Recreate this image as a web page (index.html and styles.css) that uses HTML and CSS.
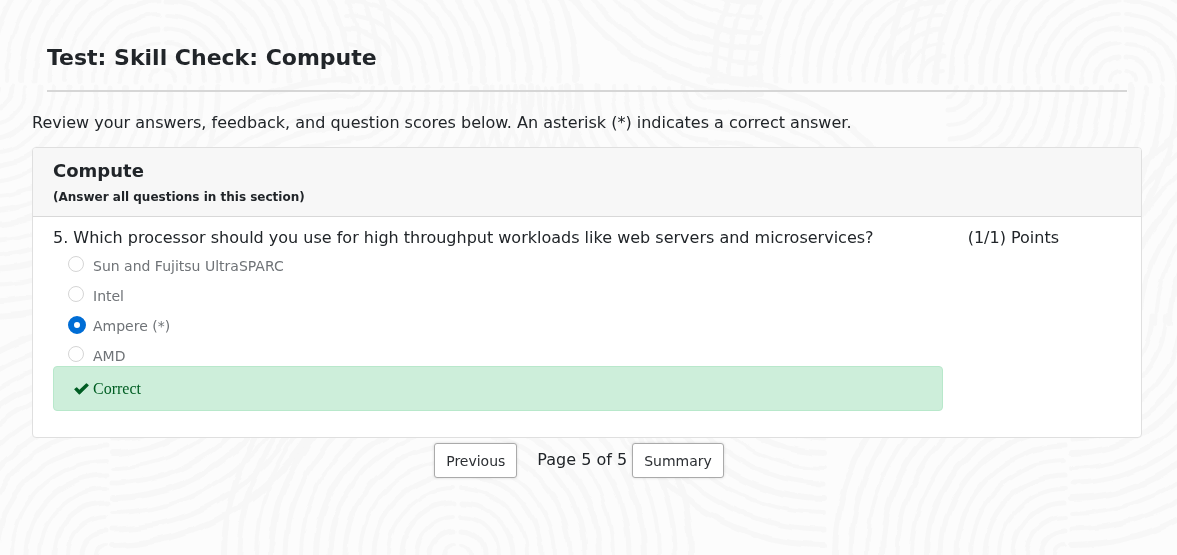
FILE: index.html
```html
<!DOCTYPE html>
<html lang="en">
<head>
<meta charset="utf-8">
<title>Test: Skill Check: Compute</title>
<link rel="stylesheet" href="styles.css">
</head>
<body>
<svg class="backdrop" aria-hidden="true">
  <defs>
    <filter id="wobble" filterUnits="userSpaceOnUse" x="0" y="0" width="100%" height="100%">
      <feTurbulence type="fractalNoise" baseFrequency="0.04" numOctaves="2" seed="4"/>
      <feDisplacementMap in="SourceGraphic" scale="6" xChannelSelector="R" yChannelSelector="G"/>
    </filter>
    <g id="fan">
      <path stroke-width="4" d="M0 10A10 10 0 0 0 10 0M0 38A38 38 0 0 0 38 0M0 66A66 66 0 0 0 66 0M0 94A94 94 0 0 0 94 0M0 153A153 153 0 0 0 153 0M0 198A198 198 0 0 0 198 0"/>
      <path stroke-width="5" d="M0 24A24 24 0 0 0 24 0M0 52A52 52 0 0 0 52 0M0 80A80 80 0 0 0 80 0M0 109A109 109 0 0 0 109 0M0 124A124 124 0 0 0 124 0M0 168A168 168 0 0 0 168 0M0 214A214 214 0 0 0 214 0"/>
      <path stroke-width="6" d="M0 138A138 138 0 0 0 138 0M0 183A183 183 0 0 0 183 0M0 230A230 230 0 0 0 230 0"/>
    </g>
  </defs>
  <g class="rings" filter="url(#wobble)">
    <use href="#fan" transform="translate(159 81) scale(-1 -1)"/>
    <use href="#fan" transform="translate(166 81) scale(1 -1)"/>
    <use href="#fan" transform="translate(346 81) scale(1 -1)"/>
    <use href="#fan" transform="translate(760 -135) scale(-1 1)"/>
    <use href="#fan" transform="translate(943 81) scale(-1 -1)"/>
    <use href="#fan" transform="translate(1119 81) scale(-1 -1)"/>
    <use href="#fan" transform="translate(1126 81) scale(1 -1)"/>
    <use href="#fan" transform="translate(-12 87)"/>
    <use href="#fan" transform="translate(348 310) scale(-1 -1)"/>
    <use href="#fan" transform="translate(348 87)"/>
    <use href="#fan" transform="translate(706 87) scale(-1 1)"/>
    <use href="#fan" transform="translate(710 310) scale(1 -1)"/>
    <use href="#fan" transform="translate(948 87)"/>
    <use href="#fan" transform="translate(1308 324) scale(-1 -1)"/>
    <use href="#fan" transform="translate(106 555) scale(-1 -1)"/>
    <use href="#fan" transform="translate(112 315)"/>
    <use href="#fan" transform="translate(454 555) scale(-1 -1)"/>
    <use href="#fan" transform="translate(461 555) scale(1 -1)"/>
    <use href="#fan" transform="translate(824 315) scale(-1 1)"/>
    <use href="#fan" transform="translate(1065 555) scale(-1 -1)"/>
    <use href="#fan" transform="translate(1072 315)"/>
  </g>
</svg>
<main class="page">
  <h1 class="title">Test: Skill Check: Compute</h1>
  <p class="intro">Review your answers, feedback, and question scores below. An asterisk (*) indicates a correct answer.</p>
  <section class="card">
    <header class="card-header">
      <h2 class="section-name">Compute</h2>
      <p class="section-note">(Answer all questions in this section)</p>
    </header>
    <div class="card-body">
      <fieldset class="question">
        <legend class="prompt">5. Which processor should you use for high throughput workloads like web servers and microservices?</legend>
        <div class="option"><input class="radio" type="radio" name="q5" id="a1" disabled><label for="a1">Sun and Fujitsu UltraSPARC</label></div>
        <div class="option"><input class="radio" type="radio" name="q5" id="a2" disabled><label for="a2">Intel</label></div>
        <div class="option"><input class="radio" type="radio" name="q5" id="a3" disabled checked><label for="a3">Ampere (*)</label></div>
        <div class="option"><input class="radio" type="radio" name="q5" id="a4" disabled><label for="a4">AMD</label></div>
        <div class="feedback">
          <svg class="check" viewBox="0 0 15 12" aria-hidden="true"><path d="M.3 6.6Q0 6.2.4 5.9L2.2 4.4Q2.7 4.1 3.1 4.5L5.4 6.7 12 .4Q12.4 0 12.9.4L14.6 1.9Q15 2.3 14.6 2.7L6 11.3Q5.4 11.9 4.8 11.3Z"/></svg>
          <span>Correct</span>
        </div>
      </fieldset>
      <div class="points">(1/1) Points</div>
    </div>
  </section>
  <nav class="pager">
    <button class="button" type="button">Previous</button>
    <span class="page-count">Page 5 of 5</span>
    <button class="button" type="button">Summary</button>
  </nav>
</main>
</body>
</html>
```
FILE: styles.css
```css
* { box-sizing: border-box; }
body {
  margin: 0;
  min-height: 100vh;
  background: #fcfcfc;
  color: #212529;
  font: 16px/24px Verdana, "DejaVu Sans", sans-serif;
}
h1, h2, p { margin: 0; }
.backdrop {
  position: fixed;
  inset: 0;
  width: 100%;
  height: 100%;
  z-index: -1;
}
.rings { fill: none; stroke: #f7f7f7; stroke-linecap: round; }
.page { padding: 41px 35px 0 32px; }
.title {
  margin: 0 15px;
  padding-bottom: 15px;
  border-bottom: 2px solid #d6d6d6;
  font-size: 22px;
  line-height: 34px;
}
.intro { margin: 19px 0 12px; }
.card {
  background: #fff;
  border: 1px solid #dfdfdf;
  border-radius: 4px;
  overflow: hidden;
}
.card-header {
  padding: 12px 20px 9px;
  background: #f7f7f7;
  border-bottom: 1px solid #d8d8d8;
}
.section-name { font-size: 18px; line-height: 22px; }
.section-note { padding-top: 5px; font-size: 12px; line-height: 20px; font-weight: bold; }
.card-body {
  display: grid;
  grid-template-columns: 5fr 1fr;
  padding: 9px 0 26px 20px;
}
.question { min-width: 0; margin: 0; padding: 0; border: 0; }
.prompt { padding: 0; white-space: nowrap; }
.option {
  display: flex;
  align-items: flex-start;
  gap: 8px;
  height: 30px;
  padding-left: 15px;
  color: #6f7377;
  font-size: 14px;
}
.option label { padding-top: 4px; }
.option:nth-last-of-type(2) { height: 26px; }
.radio {
  appearance: none;
  flex: none;
  width: 16px;
  height: 16px;
  margin: 6px 1px 0 0;
  border: 1px solid #d5d5d5;
  border-radius: 50%;
  background: #fff;
}
.radio:checked {
  width: 18px;
  height: 18px;
  margin-right: -1px;
  border: 6px solid #006dd5;
}
.feedback {
  display: flex;
  align-items: center;
  gap: 4px;
  margin-right: 17px;
  padding: 11px 20px 10px;
  border: 1px solid #b8e8cb;
  border-radius: 4px;
  background: #cdeeda;
  color: #005d23;
  font-family: "Liberation Serif", serif;
  line-height: 22px;
}
.check { width: 15px; height: 12px; fill: currentColor; }
.points { padding-left: 8px; }
.pager { display: flex; justify-content: center; padding: 5px 16px 0 0; }
.button {
  height: 35px;
  padding: 0 11px;
  border: 1px solid #aaa;
  border-radius: 3px;
  background: #fff;
  box-shadow: 0 0 3px rgba(0, 0, 0, .15);
  color: #2c2f33;
  font: 14px/24px Verdana, "DejaVu Sans", sans-serif;
}
.page-count { padding: 5px 5px 0 20px; }
```
